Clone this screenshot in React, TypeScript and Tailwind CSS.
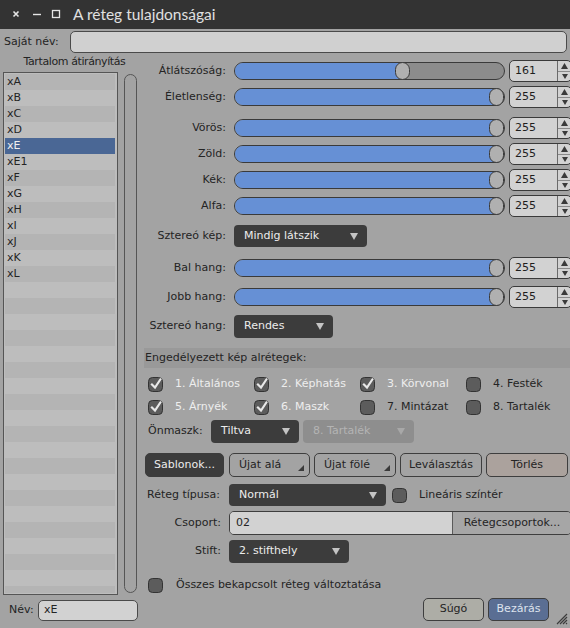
import React from 'react';

const layers = ['xA', 'xB', 'xC', 'xD', 'xE', 'xE1', 'xF', 'xG', 'xH', 'xI', 'xJ', 'xK', 'xL'];

const subLayers = [
  { label: '1. Általános', checked: true },
  { label: '2. Képhatás', checked: true },
  { label: '3. Körvonal', checked: true },
  { label: '4. Festék', checked: false },
  { label: '5. Árnyék', checked: true },
  { label: '6. Maszk', checked: true },
  { label: '7. Mintázat', checked: false },
  { label: '8. Tartalék', checked: false },
];

function Slider({ value }: { value: number }) {
  // knob is 14px wide, track travel is width - 14
  const ratio = value / 255;
  return (
    <div className="relative h-[18px] flex-1 rounded-full border border-[#3a3a3a] bg-[#8c8c8c]">
      <div
        className="absolute inset-y-0 left-0 rounded-l-full bg-[#6690d5]"
        style={{ width: `calc(${ratio} * (100% - 14px) + 7px)` }}
      />
      <div
        className="absolute top-[-1px] h-[18px] w-[15px] rounded-full border border-[#3a3a3a] bg-[#b0b0b0]"
        style={{ left: `calc(${ratio} * (100% - 14px) - 1px)` }}
      />
    </div>
  );
}

function Spin({ value }: { value: number }) {
  return (
    <div className="flex h-[22px] w-[63px] shrink-0 overflow-hidden rounded-[5px] border border-[#3a3a3a] bg-[#d2d2d2]">
      <div className="flex flex-1 items-center pl-[5px] text-[#1e1e1e]">{value}</div>
      <div className="flex w-[14px] flex-col border-l border-[#6a6a6a]">
        <div className="flex flex-1 items-center justify-center border-b border-[#8a8a8a]">
          <svg width="7" height="6" viewBox="0 0 7 6">
            <polygon points="3.5,0 7,6 0,6" fill="#3a3a3a" />
          </svg>
        </div>
        <div className="flex flex-1 items-center justify-center">
          <svg width="6" height="5" viewBox="0 0 6 5">
            <polygon points="0,0 6,0 3,5" fill="#3a3a3a" />
          </svg>
        </div>
      </div>
    </div>
  );
}

function SliderRow({ label, value, className }: { label: string; value: number; className: string }) {
  return (
    <div className={`flex h-[22px] items-center ${className}`}>
      <div className="w-[83px] shrink-0 pr-[1px] text-right">{label}</div>
      <div className="ml-[7px] flex flex-1 items-center gap-[4px]">
        <Slider value={value} />
        <Spin value={value} />
      </div>
    </div>
  );
}

function Combo({ text, className, disabled }: { text: string; className: string; disabled?: boolean }) {
  return (
    <div
      className={`flex h-full shrink-0 items-center justify-between rounded-[4px] pl-[10px] pr-[9px] ${
        disabled ? 'bg-[#8e8e8e] text-[#b4b4b4]' : 'bg-[#3c3c3c] text-[#ececec]'
      } ${className}`}
    >
      <span>{text}</span>
      <svg width="8" height="7" viewBox="0 0 8 7">
        <polygon points="0,0 8,0 4,7" fill={disabled ? '#a8a8a8' : '#c4c4c4'} />
      </svg>
    </div>
  );
}

function Check({ checked }: { checked: boolean }) {
  return (
    <svg width="15" height="15" viewBox="0 0 15 15" className="shrink-0">
      <rect x="0.5" y="0.5" width="14" height="14" rx="4" fill="#5c5c5c" stroke="#333333" />
      {checked && <path d="M3.2 6.8 L7 10.6 L13 1.5" stroke="#e8e8e8" strokeWidth="2.2" fill="none" />}
    </svg>
  );
}

function Button({ text, className, menu }: { text: string; className: string; menu?: boolean }) {
  return (
    <div className={`relative flex h-full shrink-0 items-center justify-center rounded-[5px] border ${className}`}>
      {text}
      {menu && (
        <svg width="6" height="6" viewBox="0 0 6 6" className="absolute bottom-[5px] right-[5px]">
          <polygon points="6,0 6,6 0,6" fill="#3a3a3a" />
        </svg>
      )}
    </div>
  );
}

export default function App() {
  return (
    <div className="relative flex h-[628px] w-[570px] flex-col overflow-hidden bg-[#a3a3a3] font-['DejaVu_Sans',sans-serif] text-[11px] text-[#242424]">
      {/* title bar */}
      <div className="flex h-[29px] shrink-0 items-center bg-[#333333] text-[#e0e0e0]">
        <svg width="70" height="29" viewBox="0 0 70 29" className="shrink-0">
          <path d="M13.5 11.5 L18.5 16.5 M18.5 11.5 L13.5 16.5" stroke="#e6e6e6" strokeWidth="1.6" />
          <path d="M33 14.5 H41" stroke="#e6e6e6" strokeWidth="1.4" />
          <rect x="52.5" y="10.5" width="7" height="7" fill="none" stroke="#e6e6e6" strokeWidth="1.3" />
        </svg>
        <span className="ml-[3px] font-['Lato',sans-serif] text-[15.5px]">A réteg tulajdonságai</span>
      </div>

      {/* own name */}
      <div className="mt-[2px] flex h-[22px] shrink-0 items-center pl-[4px] pr-[3px]">
        <span className="w-[66px] shrink-0">Saját név:</span>
        <div className="h-full flex-1 rounded-[5px] border border-[#4a4a4a] bg-[#d0d0d0]" />
      </div>

      <div className="flex flex-1">
        {/* left column */}
        <div className="flex w-[138px] shrink-0 flex-col pl-[3px]">
          <div className="flex h-[19px] items-center justify-center pl-[8px] tracking-[-0.4px]">
            Tartalom átirányítás
          </div>
          <div className="flex h-[523px] gap-[6px]">
            <div className="flex w-[115px] flex-col border border-[#555555] bg-[#bdbdbd] p-[1px] pr-[2px]">
              <div className="flex flex-1 flex-col overflow-hidden bg-[repeating-linear-gradient(#b4b4b4_0px,#b4b4b4_16px,#bdbdbd_16px,#bdbdbd_32px)]">
                {layers.map((name) => (
                  <div
                    key={name}
                    className={`flex h-[16px] shrink-0 items-center pl-[2px] ${
                      name === 'xE' ? 'bg-[#4a6795] text-[#f0f0f0]' : ''
                    }`}
                  >
                    {name}
                  </div>
                ))}
              </div>
            </div>
            <div className="mt-[2px] h-[519px] w-[13px] rounded-full border border-[#555555]" />
          </div>
          <div className="mt-[5px] flex h-[21px] items-center pl-[6px]">
            <span className="w-[29px] shrink-0">Név:</span>
            <div className="flex h-full flex-1 items-center rounded-[5px] border border-[#4a4a4a] bg-[#d2d2d2] pl-[5px]">
              xE
            </div>
          </div>
        </div>

        {/* right column */}
        <div className="flex flex-1 flex-col pl-[6px] pr-[3px]">
          <SliderRow label="Átlátszóság:" value={161} className="mt-[7px]" />
          <SliderRow label="Életlenség:" value={255} className="mt-[4px]" />
          <SliderRow label="Vörös:" value={255} className="mt-[9px]" />
          <SliderRow label="Zöld:" value={255} className="mt-[4px]" />
          <SliderRow label="Kék:" value={255} className="mt-[4px]" />
          <SliderRow label="Alfa:" value={255} className="mt-[4px]" />

          <div className="mt-[8px] flex h-[22px] items-center">
            <div className="w-[83px] shrink-0 pr-[1px] text-right">Sztereó kép:</div>
            <Combo text="Mindig látszik" className="ml-[7px] w-[133px]" />
          </div>

          <SliderRow label="Bal hang:" value={255} className="mt-[10px]" />
          <SliderRow label="Jobb hang:" value={255} className="mt-[7px]" />

          <div className="mt-[7px] flex h-[23px] items-center">
            <div className="w-[83px] shrink-0 pr-[1px] text-right">Sztereó hang:</div>
            <Combo text="Rendes" className="ml-[7px] w-[99px]" />
          </div>

          <div className="mr-[2px] mt-[10px] flex h-[20px] items-center bg-[#999999] pl-[1px]">
            Engedélyezett kép alrétegek:
          </div>

          <div className="mt-[6px] grid grid-cols-[106px_106px_106px_106px] gap-y-[3px] pl-[4px]">
            {subLayers.map((s) => (
              <div key={s.label} className="flex h-[20px] items-center">
                <Check checked={s.checked} />
                <span className={`ml-[12px] ${s.checked ? 'text-[#eeeeee]' : 'text-[#242424]'}`}>{s.label}</span>
              </div>
            ))}
          </div>

          <div className="mt-[3px] flex h-[23px] items-center pl-[4px]">
            <span className="w-[63px] shrink-0">Önmaszk:</span>
            <Combo text="Tiltva" className="w-[88px]" />
            <Combo text="8. Tartalék" className="ml-[4px] w-[111px]" disabled />
          </div>

          <div className="mt-[10px] flex h-[24px] gap-[4px] pl-[1px]">
            <Button text="Sablonok..." className="w-[79px] border-[#3c3c3c] bg-[#3c3c3c] text-[#ececec]" />
            <Button text="Újat alá" className="ml-[1px] w-[81px] justify-start border-[#3e3e3e] pl-[9px]" menu />
            <Button text="Újat fölé" className="w-[82px] justify-start border-[#3e3e3e] pl-[9px]" menu />
            <Button text="Leválasztás" className="w-[82px] border-[#3e3e3e]" />
            <Button text="Törlés" className="w-[82px] border-[#3e3e3e] bg-[#aba29d]" />
          </div>

          <div className="mt-[7px] flex h-[22px] items-center">
            <div className="w-[78px] shrink-0 pl-[3px]">Réteg típusa:</div>
            <Combo text="Normál" className="ml-[7px] w-[157px]" />
            <div className="ml-[6px]">
              <Check checked={false} />
            </div>
            <span className="ml-[12px]">Lineáris színtér</span>
          </div>

          <div className="mt-[5px] flex h-[24px] items-center">
            <div className="w-[78px] shrink-0 pr-[1px] text-right">Csoport:</div>
            <div className="ml-[7px] flex h-full flex-1 overflow-hidden rounded-[5px] border border-[#3e3e3e]">
              <div className="flex w-[222px] items-center bg-[#d2d2d2] pl-[6px]">02</div>
              <div className="flex flex-1 items-center justify-center border-l border-[#5a5a5a] bg-[#a6a6a6]">
                Rétegcsoportok...
              </div>
            </div>
          </div>

          <div className="mt-[5px] flex h-[23px] items-center">
            <div className="w-[78px] shrink-0 pr-[1px] text-right">Stift:</div>
            <Combo text="2. stifthely" className="ml-[7px] w-[120px]" />
          </div>

          <div className="mt-[13px] flex h-[18px] items-center pl-[4px]">
            <Check checked={false} />
            <span className="ml-[13px]">Összes bekapcsolt réteg változtatása</span>
          </div>

          <div className="mt-[4px] flex h-[23px] justify-end gap-[4px] pr-[23px]">
            <Button text="Súgó" className="w-[61px] border-[#3e3e3e] bg-[#adada6]" />
            <Button text="Bezárás" className="w-[61px] border-[#3e3e3e] bg-[#5a6e93] text-[#dde3ee]" />
          </div>
        </div>
      </div>

      {/* resize grip */}
      <svg width="14" height="14" viewBox="0 0 14 14" className="absolute bottom-[3px] right-[2px]">
        <path d="M13 3 L3 13 M13 6 L6 13 M13 9 L9 13 M13 12 L12 13" stroke="#3c3c3c" strokeWidth="1.2" />
      </svg>
    </div>
  );
}
